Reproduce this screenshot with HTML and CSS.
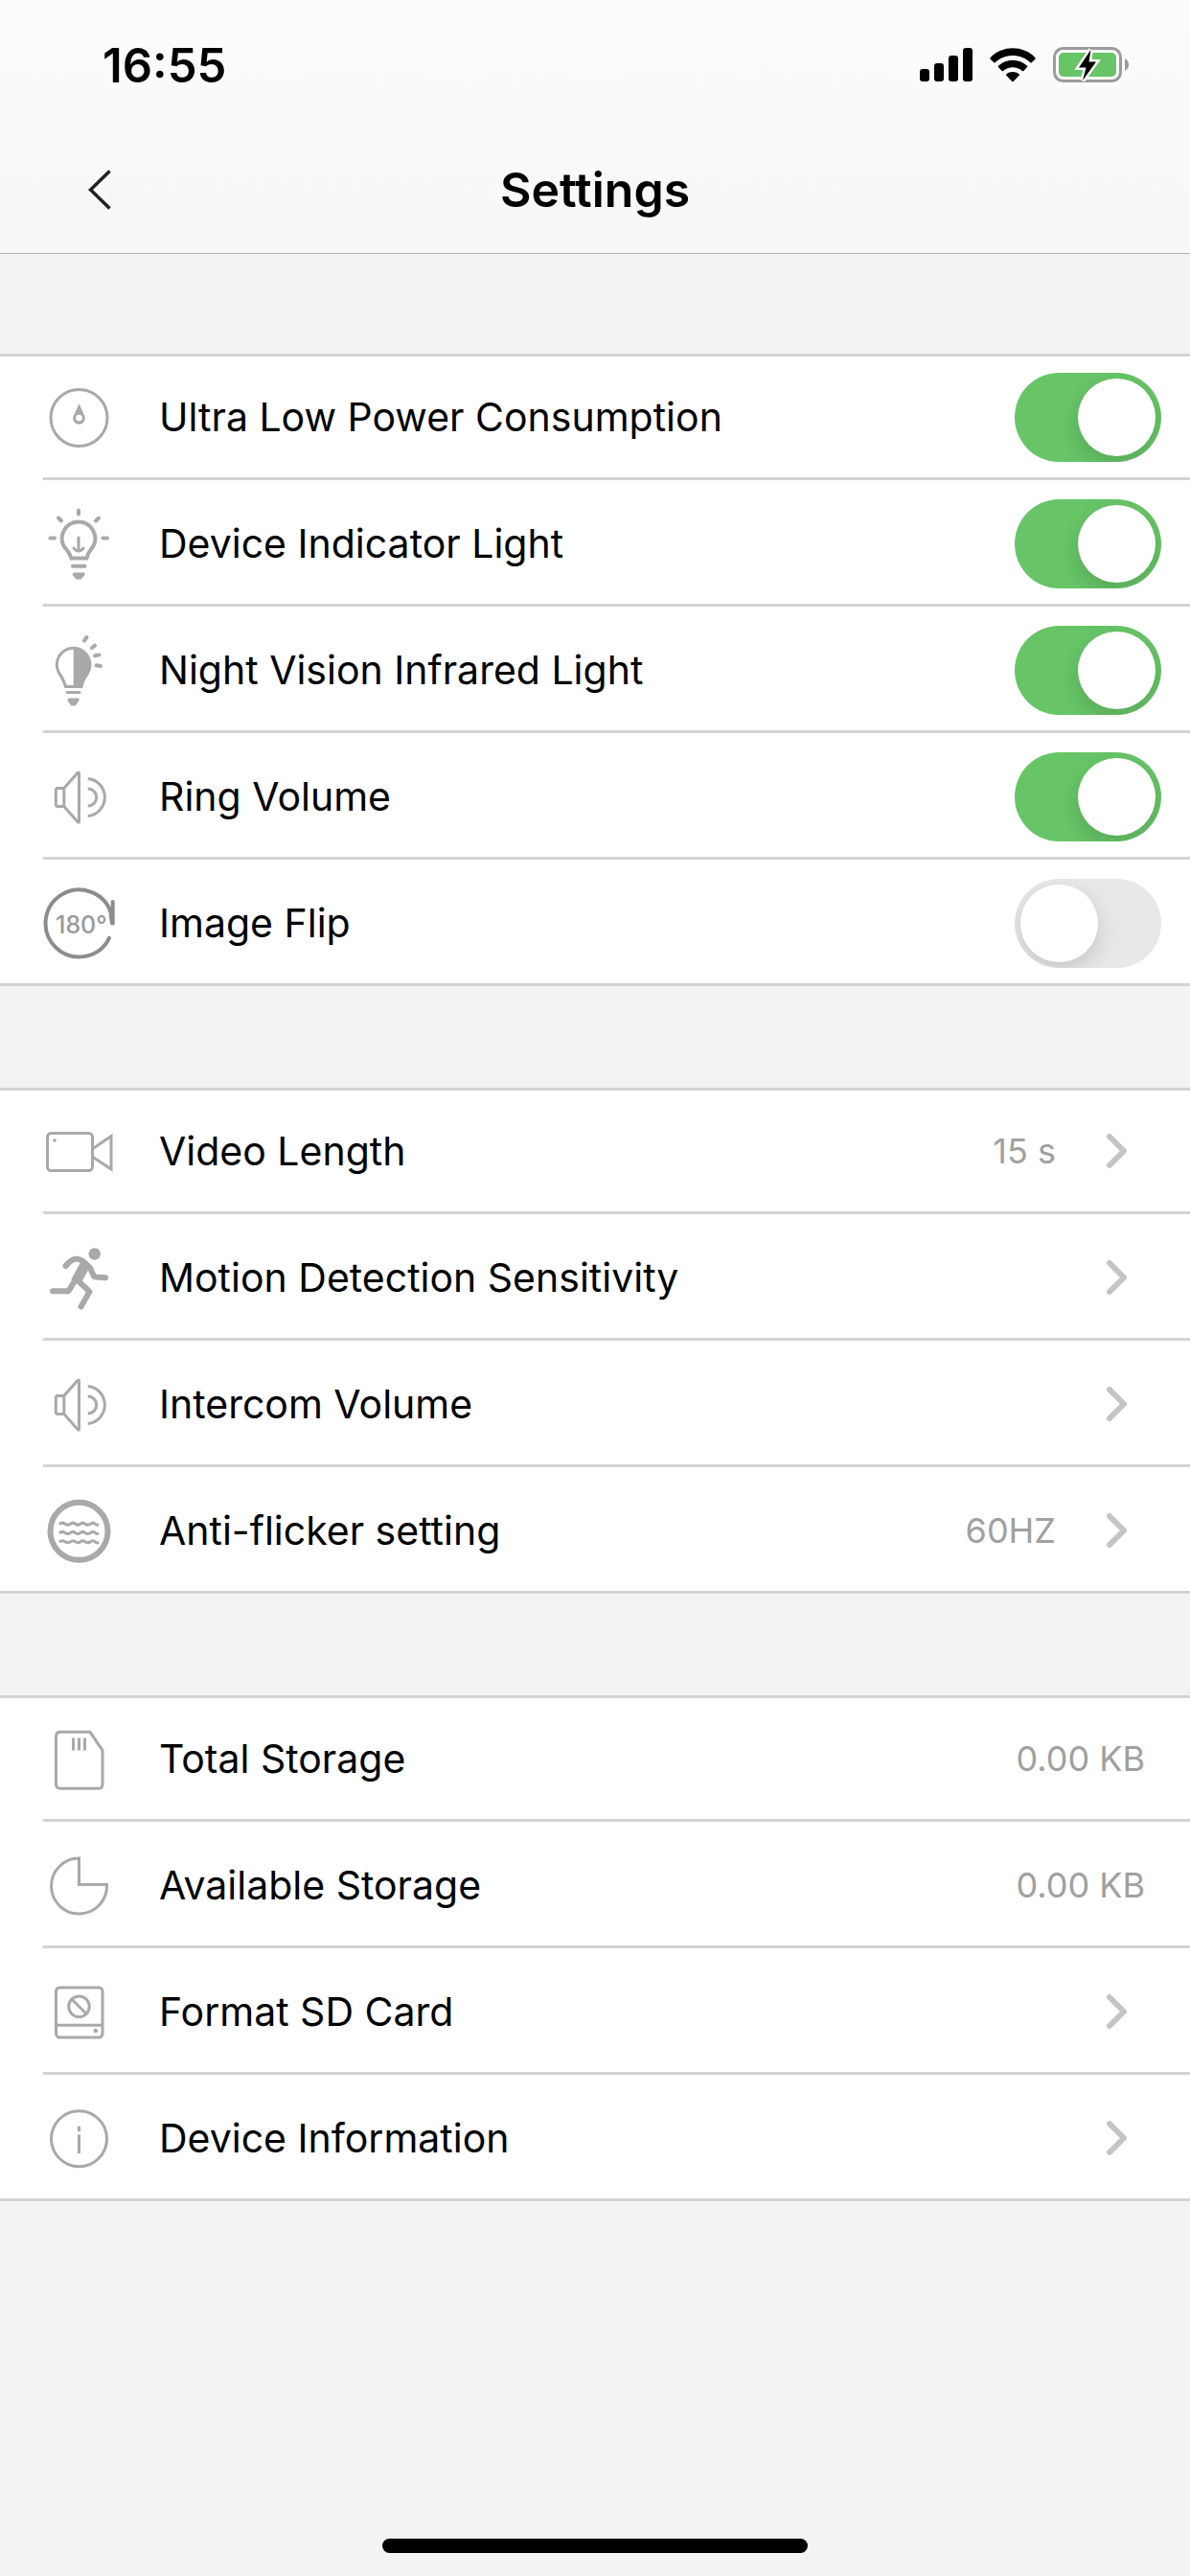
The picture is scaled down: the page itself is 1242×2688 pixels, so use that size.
FILE: index.html
```html
<!DOCTYPE html>
<html lang="en">
<head>
    <meta charset="UTF-8">
    <meta name="viewport" content="width=device-width">
    <title>Settings</title>
    <link rel="stylesheet" href="styles.css">
</head>
<body>
    <header class="top">
        <div class="status-bar">
            <span class="time">16:55</span>
            <div class="status-icons">
                <svg width="55" height="36" viewBox="0 0 55 36">
                    <rect x="0" y="22" width="10" height="13" rx="3"/>
                    <rect x="15" y="16" width="10" height="19" rx="3"/>
                    <rect x="30" y="8" width="10" height="27" rx="3"/>
                    <rect x="45" y="0" width="10" height="35" rx="3"/>
                </svg>
                <svg width="48" height="36" viewBox="0 0 48 36">
                    <path d="M0.6 10.2C13-3 35-3 47.4 10.2Q48 11 47.4 11.7L43.6 15.3Q43 15.8 42.3 15.2C32 5.6 16 5.6 5.7 15.2Q5 15.8 4.4 15.3L0.6 11.7Q0 11 0.6 10.2Z"/>
                    <path d="M8.9 18.8C17 10.6 31 10.6 39.1 18.8Q39.7 19.5 39.1 20.1L35.3 24Q34.6 24.6 33.9 24C28.4 19 19.6 19 14.1 24Q13.4 24.6 12.7 24L8.9 20.1Q8.3 19.5 8.9 18.8Z"/>
                    <path d="M17.4 27.3C21 24.2 27 24.2 30.6 27.3Q31.4 28 30.7 28.8L24.7 35Q24 35.7 23.3 35L17.3 28.8Q16.6 28 17.4 27.3Z"/>
                </svg>
                <svg width="79" height="38" viewBox="0 0 79 38">
                    <rect x="1.5" y="1.5" width="69" height="34" rx="9" fill="none" stroke="#9b9b9b" stroke-width="3"/>
                    <path d="M75 12Q79 14 79 18.5Q79 23 75 25Z" fill="#9b9b9b"/>
                    <rect x="6" y="6" width="60" height="25" rx="5" fill="#67c567"/>
                    <path d="M39.500 3L27 21.500H34.500L31 35L45 15.500H37.500Z" fill="#000" stroke="#fafafa" stroke-width="5" paint-order="stroke"/>
                </svg>
            </div>
        </div>
        <nav class="nav-bar">
            <button class="back" type="button" aria-label="Back">
                <svg width="24" height="42" viewBox="0 0 24 42"><path d="M22.5 1.5L2.5 21L22.5 40.5" fill="none" stroke="#222" stroke-width="3.5"/></svg>
            </button>
            <h1>Settings</h1>
        </nav>
    </header>

    <!-- shared icons -->
    <svg class="defs" width="0" height="0">
        <symbol id="speaker" viewBox="0 0 75 75">
            <rect x="13.3" y="28.5" width="8.5" height="19" rx="2"/>
            <path d="M21.8 28.5L36 12.5Q37.5 11.5 37.5 13V63Q37.5 65 36 63.5L21.8 47.5"/>
            <path d="M46.7 18.5A19.6 19.6 0 0 1 46.7 57.5M46.7 29A9 9 0 0 1 46.7 47"/>
        </symbol>
        <symbol id="chevron" viewBox="0 0 21 36">
            <path d="M3 3L18 18L3 33"/>
        </symbol>
    </svg>

    <main>
        <ul class="group">
            <li><div class="row">
                <svg class="icon" viewBox="0 0 75 75">
                    <circle cx="37.5" cy="38" r="29.5"/>
                    <path class="solid" fill-rule="evenodd" d="M37.5 23L43 35.5A6.3 6.3 0 1 1 32 35.5ZM37.5 34.8A3.3 3.3 0 1 0 37.5 41.4A3.3 3.3 0 1 0 37.5 34.8Z"/>
                </svg>
                <label for="low-power">Ultra Low Power Consumption</label>
                <input class="switch" type="checkbox" id="low-power" checked>
            </div></li>
            <li><div class="row">
                <svg class="icon bold" viewBox="0 0 75 75">
                    <path d="M37 2.5V6.5M7.5 31.5H12M62.5 31.5H67M16 10.5L19 13.5M58 10.5L55 13.5"/>
                    <path d="M29.5 52.5H45.5L47 48Q49 44.5 52 40.5A17.3 17.3 0 1 0 22 40.5Q25.5 44.5 27.5 48Z"/>
                    <path d="M37 31V45M32 42Q34 45 37 45Q40 45 42 42" stroke-width="3" class="thin"/>
                    <path d="M31 60.8H43.5"/>
                    <path class="solid" d="M32 67.5H42.5Q44.5 68.5 43 70.5L39.5 74.5H34.5L31 70.5Q30 68.5 32 67.5Z"/>
                </svg>
                <label for="indicator">Device Indicator Light</label>
                <input class="switch" type="checkbox" id="indicator" checked>
            </div></li>
            <li><div class="row">
                <svg class="icon bold" viewBox="0 0 75 75">
                    <path d="M45.5 3L43 6.5M54 11.7L51 14M58.5 21.4L54 22.2M55.5 32.3L60 33"/>
                    <path class="thin" d="M23.5 54.5H40L41.5 49.5Q43.5 44.5 46.5 40.5A17.3 17.3 0 1 0 16.8 40.5Q19.8 44.5 21.5 49Z"/>
                    <path class="solid" d="M31.7 14V54.5H40L41.5 49.5Q43.5 44.5 46.5 40.5A17.3 17.3 0 0 0 31.7 14Z"/>
                    <path class="thin" d="M25 60.5H38"/>
                    <path class="solid" d="M27 66.5H36.5Q38.5 67.5 37 70L33.5 74.5H29.5L26 70Q24.5 67.5 27 66.5Z"/>
                </svg>
                <label for="infrared">Night Vision Infrared Light</label>
                <input class="switch" type="checkbox" id="infrared" checked>
            </div></li>
            <li><div class="row">
                <svg class="icon"><use href="#speaker"/></svg>
                <label for="ring">Ring Volume</label>
                <input class="switch" type="checkbox" id="ring" checked>
            </div></li>
            <li><div class="row">
                <svg class="icon bold dark" viewBox="0 0 75 75">
                    <path d="M69 52.8A35 35 0 1 1 71.5 29"/>
                    <path d="M72.7 15V37.5M70.5 28L72 37.5"/>
                    <text x="13" y="48">180°</text>
                </svg>
                <label for="flip">Image Flip</label>
                <input class="switch" type="checkbox" id="flip">
            </div></li>
        </ul>

        <ul class="group">
            <li>
                <a class="row" href="#video-length">
                    <svg class="icon" viewBox="0 0 75 75">
                        <rect x="4.5" y="18.5" width="47" height="39" rx="4"/>
                        <path d="M52 34.5L71 21.5V56L52 43.5"/>
                        <circle class="solid" cx="12" cy="26" r="1.8"/>
                    </svg>
                    <span class="name">Video Length</span>
                    <span class="value">15 s</span>
                    <svg class="chevron"><use href="#chevron"/></svg>
                </a>
            </li>
            <li>
                <a class="row" href="#motion">
                    <svg class="icon runner" viewBox="0 0 75 75">
                        <circle class="solid" cx="53.7" cy="12.5" r="6.2"/>
                        <path d="M23.5 25Q29 18.5 33.5 17.8Q38 17 42 20.5L49 27L52.5 34.5Q53 36.3 55 36.5L65 37.3"/>
                        <path class="torso" d="M44.5 22.5L34 42"/>
                        <path d="M34 39L26.5 51.2H10"/>
                        <path d="M37 41L48.5 51.8L39.5 67.5"/>
                    </svg>
                    <span class="name">Motion Detection Sensitivity</span>
                    <svg class="chevron"><use href="#chevron"/></svg>
                </a>
            </li>
            <li>
                <a class="row" href="#intercom">
                    <svg class="icon"><use href="#speaker"/></svg>
                    <span class="name">Intercom Volume</span>
                    <svg class="chevron"><use href="#chevron"/></svg>
                </a>
            </li>
            <li>
                <a class="row" href="#anti-flicker">
                    <svg class="icon" viewBox="0 0 75 75">
                        <circle class="ring" cx="37.5" cy="37.8" r="30"/>
                        <path d="M17 30.5Q20 28 22.5 30T28 30.5Q31 28 33.5 30T38.5 30.5Q41 28 43.5 30T49 30.5Q52 28 54 30T58 30.5"/>
                        <path d="M17 39.8Q20 37.3 22.5 39.3T28 39.8Q31 37.3 33.5 39.3T38.5 39.8Q41 37.3 43.5 39.3T49 39.8Q52 37.3 54 39.3T58 39.8"/>
                        <path d="M17 49.2Q20 46.7 22.5 48.7T28 49.2Q31 46.7 33.5 48.7T38.5 49.2Q41 46.7 43.5 48.7T49 49.2Q52 46.7 54 48.7T58 49.2"/>
                    </svg>
                    <span class="name">Anti-flicker setting</span>
                    <span class="value">60HZ</span>
                    <svg class="chevron"><use href="#chevron"/></svg>
                </a>
            </li>
        </ul>

        <ul class="group">
            <li><div class="row">
                <svg class="icon" viewBox="0 0 75 75">
                    <path d="M18 9.3H49L62 28.5V64Q62 68.2 58 68.2H18Q13.5 68.2 13.5 64V13.5Q13.5 9.3 18 9.3Z"/>
                    <path d="M31.5 15.5V28.5M37.5 15.5V28.5M43.5 15.5V28.5"/>
                </svg>
                <span class="name">Total Storage</span>
                <span class="value">0.00 KB</span>
            </div></li>
            <li><div class="row">
                <svg class="icon" viewBox="0 0 75 75">
                    <path d="M37.5 9V36.5H66.5A29 29 0 1 1 37.5 9Z"/>
                </svg>
                <span class="name">Available Storage</span>
                <span class="value">0.00 KB</span>
            </div></li>
            <li>
                <a class="row" href="#format">
                    <svg class="icon" viewBox="0 0 75 75">
                        <rect x="13.5" y="12" width="48.5" height="52" rx="4"/>
                        <path d="M13.5 51.2H62"/>
                        <circle cx="37.5" cy="31.8" r="10.8"/>
                        <path d="M30 24.3L45 39.3"/>
                        <circle class="solid" cx="54.7" cy="57" r="2.3"/>
                    </svg>
                    <span class="name">Format SD Card</span>
                    <svg class="chevron"><use href="#chevron"/></svg>
                </a>
            </li>
            <li>
                <a class="row" href="#info">
                    <svg class="icon" viewBox="0 0 75 75">
                        <circle cx="37.5" cy="37.8" r="29"/>
                        <path d="M37.5 24.8V30M37.5 33.5V53"/>
                    </svg>
                    <span class="name">Device Information</span>
                    <svg class="chevron"><use href="#chevron"/></svg>
                </a>
            </li>
        </ul>
    </main>

    <div class="home-indicator"></div>
</body>
</html>
```
FILE: styles.css
```css
* {
    box-sizing: border-box;
}

body {
    margin: 0;
    min-height: 100vh;
    display: flex;
    flex-direction: column;
    background-color: #f3f3f3;
    color: #000;
    font-family: Inter, "Liberation Sans", sans-serif;
    font-size: 41px;
}

svg {
    display: block;
}

.defs {
    position: absolute;
}

.top {
    background: linear-gradient(#fcfcfc, #f7f7f7);
    border-bottom: 1px solid #b0b0b0;
}

.status-bar {
    display: flex;
    align-items: center;
    justify-content: space-between;
    height: 132px;
    padding: 4px 64px 0 107px;
}

.time {
    font-size: 49px;
    font-weight: 600;
}

.status-icons {
    display: flex;
    align-items: center;
    gap: 18px;
}

.nav-bar {
    display: grid;
    grid-template-columns: 1fr auto 1fr;
    align-items: center;
    height: 132px;
    padding: 0 60px;
}

.nav-bar h1 {
    margin: 0;
    font-size: 50px;
    font-weight: 600;
}

.back {
    justify-self: start;
    padding: 32px;
    border: none;
    background: none;
    cursor: pointer;
}

.group {
    list-style: none;
    margin: 104px 0 106px;
    padding: 0;
    background-color: #fff;
    border-top: 3px solid #d3d3d3;
    border-bottom: 3px solid #d3d3d3;
}

.group + .group {
    margin-top: 0;
}

.row {
    display: flex;
    align-items: center;
    height: 132px;
    margin-left: 45px;
    padding: 3px 30px 0 0;
    border-bottom: 3px solid #d3d3d3;
    color: inherit;
    text-decoration: none;
}

/* the group's own border takes the place of the outer lines */
li:first-child > .row {
    height: 129px;
    padding-top: 0;
}

li:last-child > .row {
    height: 129px;
    border-bottom: none;
}

.icon {
    width: 75px;
    height: 75px;
    margin-right: 46px;
    flex-shrink: 0;
    fill: none;
    stroke: #a9a9a9;
    stroke-width: 3;
}

.icon.bold {
    stroke-width: 4;
    stroke-linecap: round;
}

.icon .thin {
    stroke-width: 3;
}

.icon .solid {
    fill: #a9a9a9;
    stroke: none;
}

.icon .ring {
    stroke-width: 6;
}

.icon.runner {
    stroke-width: 6;
    stroke-linecap: round;
    stroke-linejoin: round;
}

.icon .torso {
    stroke-width: 11;
    stroke-linecap: butt;
}

.icon.dark {
    stroke: #8c8c8c;
}

.icon text {
    fill: #999;
    stroke: none;
    font-size: 25px;
    font-weight: 500;
}

label,
.name {
    flex: 1;
}

.value {
    color: #a0a0a0;
    font-size: 36px;
    margin-right: 17px;
}

.chevron {
    width: 21px;
    height: 36px;
    margin: 0 36px;
    fill: none;
    stroke: #c4c4c6;
    stroke-width: 6;
    stroke-linecap: round;
    stroke-linejoin: round;
}

.switch {
    appearance: none;
    width: 153px;
    height: 93px;
    margin: 0;
    padding: 6px;
    border-radius: 47px;
    background-color: #e8e8e8;
    overflow: hidden;
    display: flex;
    cursor: pointer;
}

.switch::before {
    content: "";
    width: 81px;
    height: 81px;
    border-radius: 50%;
    background-color: #fff;
    box-shadow: 0 9px 24px rgba(0, 0, 0, 0.15);
}

.switch:checked {
    background-color: #67c567;
    justify-content: flex-end;
}

.home-indicator {
    width: 444px;
    height: 15px;
    margin: auto auto 24px;
    border-radius: 8px;
    background-color: #000;
}
```
